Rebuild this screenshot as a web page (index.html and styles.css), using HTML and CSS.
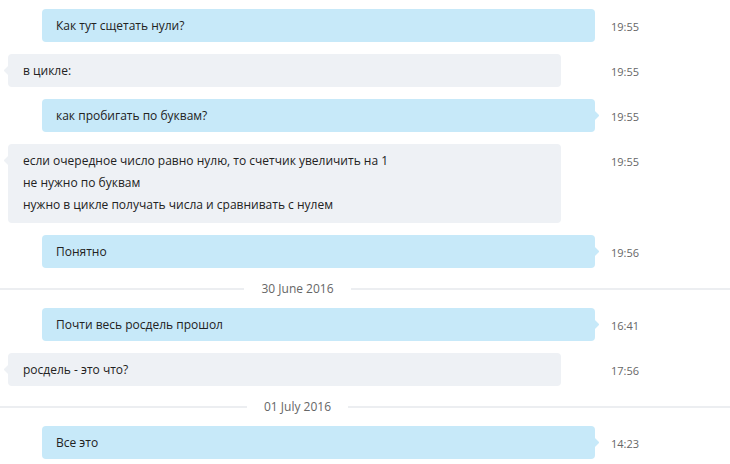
FILE: index.html
```html
<!DOCTYPE html>
<html lang="ru">
<head>
<meta charset="utf-8">
<link rel="stylesheet" href="styles.css">
</head>
<body>
<div class="chat">
  <div class="row out">
    <div class="bubble">Как тут сщетать нули?</div>
    <div class="time">19:55</div>
  </div>
  <div class="row in">
    <div class="bubble tail">в цикле:</div>
    <div class="time">19:55</div>
  </div>
  <div class="row out">
    <div class="bubble tail">как пробигать по буквам?</div>
    <div class="time">19:55</div>
  </div>
  <div class="row in">
    <div class="bubble tail multi">если очередное число равно нулю, то счетчик увеличить на 1<br>не нужно по буквам<br>нужно в цикле получать числа и сравнивать с нулем</div>
    <div class="time">19:55</div>
  </div>
  <div class="row out">
    <div class="bubble tail">Понятно</div>
    <div class="time">19:56</div>
  </div>
  <div class="divider"><div class="label"><span>30 June 2016</span></div></div>
  <div class="row out">
    <div class="bubble tail">Почти весь росдель прошол</div>
    <div class="time">16:41</div>
  </div>
  <div class="row in">
    <div class="bubble tail">росдель - это что?</div>
    <div class="time">17:56</div>
  </div>
  <div class="divider"><div class="label"><span>01 July 2016</span></div></div>
  <div class="row out">
    <div class="bubble tail">Все это</div>
    <div class="time">14:23</div>
  </div>
</div>
</body>
</html>
```
FILE: styles.css
```css
html, body {
  margin: 0;
  padding: 0;
  background: #ffffff;
}
body {
  font-family: "Open Sans", "Noto Sans", sans-serif;
  color: #222;
  width: 730px;
  height: 464px;
  overflow: hidden;
}
.chat {
  padding-top: 9px;
  display: flex;
  flex-direction: column;
}
.row {
  display: grid;
  margin-bottom: 12px;
}
.row.out {
  padding-left: 42px;
  grid-template-columns: 553px 1fr;
}
.row.in {
  padding-left: 8px;
  grid-template-columns: 553px 1fr;
}
.row.in .time {
  padding-left: 50px;
}
.row.out .time {
  padding-left: 16px;
}
.bubble {
  position: relative;
  font-size: 12px;
  line-height: 22px;
  padding: 6px 14px 5px 14px;
  border-radius: 4px;
}
.row.in .bubble {
  padding-left: 15px;
  background: #eef1f5;
}
.row.out .bubble {
  background: #c7e9f9;
}
.bubble.multi {
  padding-bottom: 7px;
}
.row.out .bubble.tail::after {
  content: "";
  position: absolute;
  right: -3px;
  top: 50%;
  width: 7px;
  height: 7px;
  margin-top: -4px;
  background: #c7e9f9;
  transform: rotate(45deg);
  border-radius: 1px;
}
.row.in .bubble.tail::after {
  content: "";
  position: absolute;
  left: -3px;
  top: 13px;
  width: 7px;
  height: 7px;
  background: #eef1f5;
  transform: rotate(45deg);
  border-radius: 1px;
}
.time {
  font-size: 11px;
  color: #666;
  line-height: 22px;
  padding-top: 7px;
}
.divider {
  position: relative;
  height: 20px;
  margin: 0 0 8px 0;
  display: flex;
  align-items: center;
}
.divider::before {
  content: "";
  position: absolute;
  left: 0;
  right: 0;
  top: 50%;
  height: 2px;
  margin-top: -2px;
  background: #eceef1;
}
.divider .label {
  position: relative;
  width: 595px;
  display: flex;
  justify-content: center;
}
.divider span {
  background: #fff;
  padding: 0 17px;
  font-size: 12px;
  line-height: 16px;
  margin-top: -3px;
  color: #666;
}
```
